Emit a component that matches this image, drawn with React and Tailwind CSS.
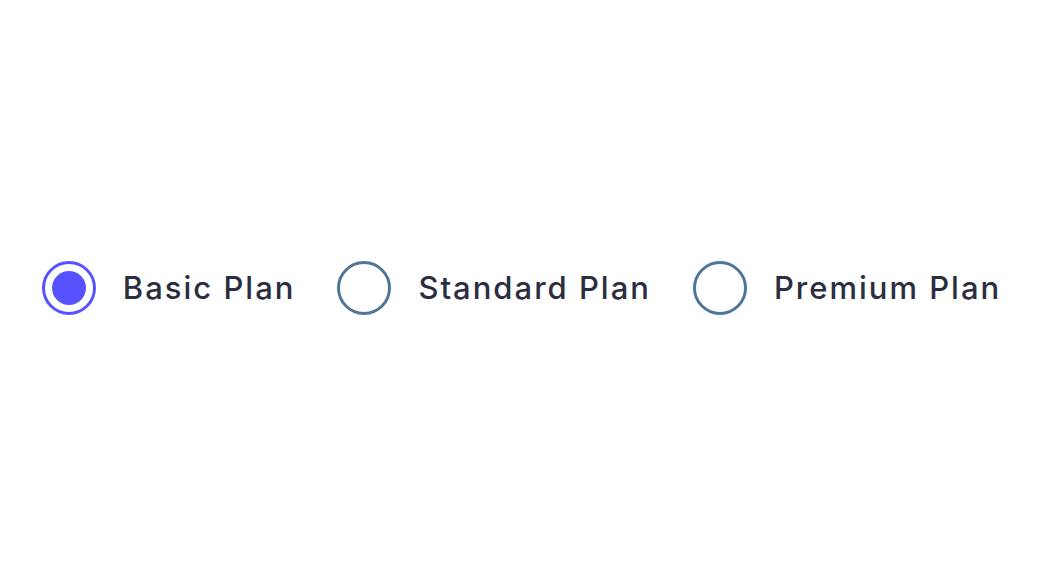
export default function App() {
  const items = [
    { label: "Basic Plan", checked: true },
    { label: "Standard Plan", checked: false },
    { label: "Premium Plan", checked: false },
  ];
  return (
    <div className="flex h-[575px] w-full items-center justify-center bg-white" style={{ fontFamily: 'Inter, sans-serif' }}>
      <div className="flex items-center gap-[42px]">
        {items.map((it) => (
          <label key={it.label} className="flex items-center gap-[27px]">
            {it.checked ? (
              <span className="flex h-[54px] w-[54px] items-center justify-center rounded-full border-[3px] border-[#5652ff]">
                <span className="h-[34px] w-[34px] rounded-full bg-[#5652ff]" />
              </span>
            ) : (
              <span className="h-[54px] w-[54px] rounded-full border-[3px] border-[#4f7697]" />
            )}
            <span className="text-[31px] font-medium leading-none tracking-[2px] text-[#2b2e40]">{it.label}</span>
          </label>
        ))}
      </div>
    </div>
  );
}
